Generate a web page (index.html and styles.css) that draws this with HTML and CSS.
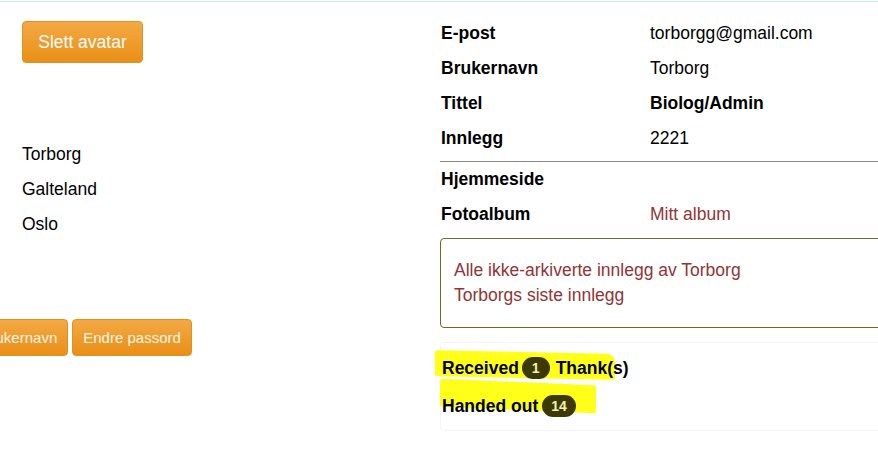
FILE: index.html
```html
<!DOCTYPE html>
<html lang="no">
<head>
<meta charset="utf-8">
<title>Profil</title>
<link rel="stylesheet" href="styles.css">
</head>
<body>
<div class="topline"></div>
<div class="page">
  <div class="left">
    <button class="btn btn-big">Slett avatar</button>
    <div class="names">
      <div class="name-row">Torborg</div>
      <div class="name-row">Galteland</div>
      <div class="name-row">Oslo</div>
    </div>
    <div class="btn-row">
      <button class="btn btn-small">Endre brukernavn</button>
      <button class="btn btn-small">Endre passord</button>
    </div>
  </div>
  <div class="right">
    <div class="info">
      <div class="row"><span class="label">E-post</span><span class="value">torborgg@gmail.com</span></div>
      <div class="row"><span class="label">Brukernavn</span><span class="value">Torborg</span></div>
      <div class="row"><span class="label">Tittel</span><span class="value bold">Biolog/Admin</span></div>
      <div class="row"><span class="label">Innlegg</span><span class="value">2221</span></div>
    </div>
    <div class="divider"></div>
    <div class="info">
      <div class="row"><span class="label">Hjemmeside</span><span class="value"></span></div>
      <div class="row"><span class="label">Fotoalbum</span><a class="value link" href="#">Mitt album</a></div>
    </div>
    <div class="links-box">
      <a class="link" href="#">Alle ikke-arkiverte innlegg av Torborg</a>
      <a class="link" href="#">Torborgs siste innlegg</a>
    </div>
    <div class="thanks">
      <div class="hl hl-1"></div>
      <div class="hl hl-2"></div>
      <div class="thanks-row"><span>Received</span><span class="badge">1</span><span>Thank(s)</span></div>
      <div class="thanks-row"><span>Handed out</span><span class="badge badge-wide">14</span></div>
    </div>
  </div>
</div>
</body>
</html>
```

FILE: styles.css
```css
html, body {
  margin: 0;
  padding: 0;
  background: #ffffff;
  overflow: hidden;
}

body {
  font-family: "Liberation Sans", Arial, sans-serif;
  font-size: 17.5px;
  color: #000;
  width: 878px;
  height: 464px;
}

.topline {
  margin-top: 1px;
  height: 1px;
  background: #cfe7ee;
}

.page {
  display: flex;
  align-items: flex-start;
}

.left {
  flex: none;
  width: 418px;
  padding-left: 22px;
}

.btn {
  font-family: "Liberation Sans", Arial, sans-serif;
  color: #fff;
  background: linear-gradient(#f3a944, #ea8f17);
  border: 1px solid #e3901f;
  border-radius: 4px;
  cursor: pointer;
  box-sizing: border-box;
}

.btn-big {
  display: block;
  margin-top: 19px;
  height: 42px;
  width: 121px;
  font-size: 17.5px;
  padding: 0;
}

.names {
  margin-top: 74px;
}

.name-row {
  height: 35px;
  line-height: 35px;
}

.btn-row {
  display: flex;
  gap: 4px;
  margin-top: 77px;
  margin-left: -95px;
}

.btn-small {
  height: 37px;
  font-size: 15px;
  padding: 0 10px;
  color: #fff6e6;
}

.right {
  flex: none;
  width: 470px;
  padding-top: 14px;
}

.row {
  display: flex;
  height: 35px;
  line-height: 35px;
}

.label {
  flex: none;
  width: 209px;
  padding-left: 1px;
  font-weight: bold;
}

.value.bold {
  font-weight: bold;
}

.link {
  color: #8f3535;
  text-decoration: none;
}

.divider {
  height: 1px;
  background: #8a8a8a;
  margin: 5px 0 0 0;
}

.links-box {
  margin-top: 6px;
  border: 1px solid #6e6a2e;
  border-radius: 4px;
  padding: 19px 13px;
  display: flex;
  flex-direction: column;
  line-height: 25px;
}

.thanks {
  position: relative;
  margin-top: 14px;
  height: 89px;
  box-sizing: border-box;
  border: 1px solid #f4f4f4;
  border-radius: 4px;
  padding-top: 6px;
}

.thanks-row {
  position: relative;
  z-index: 1;
  font-weight: bold;
  height: 38px;
  padding-left: 1px;
  display: flex;
  align-items: center;
}

.badge {
  display: inline-block;
  background: #3c3a02;
  color: #f5f0b0;
  font-size: 14px;
  font-weight: bold;
  height: 22px;
  line-height: 22px;
  border-radius: 11px;
  padding: 0 10px;
  margin: 0 6px 0 3px;
}

.badge-wide {
  padding: 0 9px;
  margin-left: 4px;
}

.hl {
  position: absolute;
  background: #ffff1a;
  z-index: 0;
}

.hl-1 {
  left: -6px;
  top: 9px;
  width: 180px;
  height: 26px;
  border-radius: 2px 8px 3px 2px;
  transform: skewY(1.2deg);
}

.hl-2 {
  left: -1px;
  top: 39px;
  width: 156px;
  height: 28px;
  border-radius: 4px 2px 2px 2px;
  transform: skewY(2.5deg);
}
```
